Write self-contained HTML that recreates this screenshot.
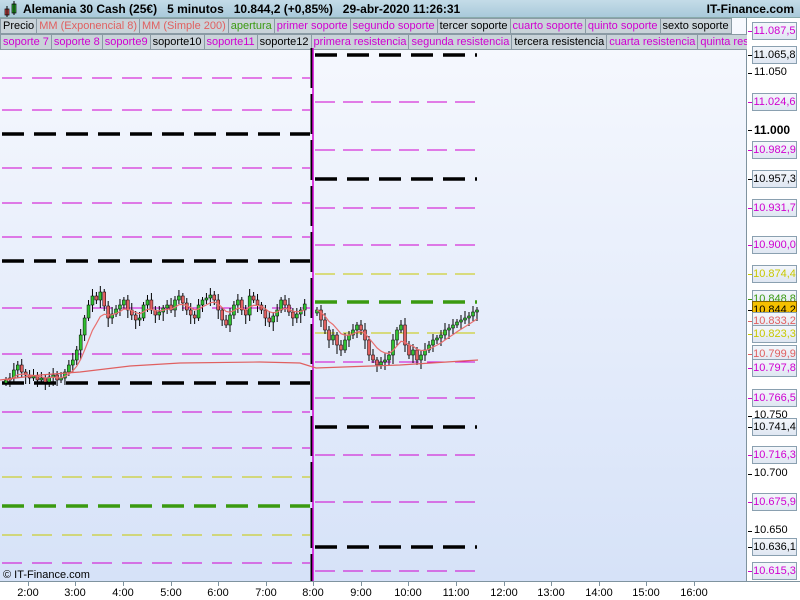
<!DOCTYPE html>
<html><head><meta charset="utf-8"><style>
*{margin:0;padding:0;box-sizing:border-box}
body{width:800px;height:600px;overflow:hidden;font-family:"Liberation Sans",sans-serif;background:#fff;position:relative}
#hdr{position:absolute;left:0;top:0;width:800px;height:18px;background:linear-gradient(#c4dce8,#a9c9da);border-bottom:1px solid #8aa;font-size:12px;font-weight:bold;line-height:18px;color:#000}
#chart{position:absolute;left:0;top:18px;width:747px;height:563px;background:linear-gradient(#f7f9fe,#d6e2f8);border-right:1px solid #7f939f}
.row{position:absolute;left:0;height:16px;font-size:11px;line-height:15px;white-space:nowrap;overflow:hidden}
.row span{display:inline-block;background:#c9d3d9;border:1px solid #8a9aa4;padding:0 2px;margin-right:-1px;height:16px}
.m{color:#d000d0}.r{color:#e06060}.g{color:#3a9a10}.k{color:#000}
#ax{position:absolute;left:748px;top:18px;width:52px;height:563px;background:#fff}
.pl{position:absolute;left:752px;width:45px;height:18px;font-size:11px;line-height:16px;text-align:center;border:1px solid #8aa0b0;background:linear-gradient(#f4f7fb,#dfe7f2)}
.pt{position:absolute;left:754px;font-size:11px}
#tax{position:absolute;left:0;top:581px;width:800px;height:19px;background:#fff;border-top:1px solid #7f939f;font-size:11px}
#tax div{position:absolute;top:5px;transform:translateX(-50%)}
#tax i{position:absolute;top:0;width:1px;height:4px;background:#7f939f}
</style></head><body>
<div id="hdr">
<svg width="16" height="18" style="position:absolute;left:3px;top:0"><rect x="2" y="9" width="4" height="6" fill="#e05050" stroke="#000" stroke-width=".7"/><line x1="4" y1="6" x2="4" y2="17" stroke="#000"/><rect x="9" y="4" width="4" height="9" fill="#30c030" stroke="#000" stroke-width=".7"/><line x1="11" y1="1" x2="11" y2="15" stroke="#000"/></svg>
<span style="position:absolute;left:23px">Alemania 30 Cash (25€)&nbsp;&nbsp;&nbsp;5 minutos&nbsp;&nbsp;&nbsp;10.844,2 (+0,85%)&nbsp;&nbsp;&nbsp;29-abr-2020 11:26:31</span>
<span style="position:absolute;right:6px">IT-Finance.com</span>
</div>
<div id="chart"></div>
<div class="row" style="top:18px;width:325px;width:748px"><span class="k">Precio</span><span class="r">MM (Exponencial 8)</span><span class="r">MM (Simple 200)</span><span class="g">apertura</span><span class="m">primer soporte</span><span class="m">segundo soporte</span><span class="k">tercer soporte</span><span class="m">cuarto soporte</span><span class="m">quinto soporte</span><span class="k">sexto soporte</span></div>
<div class="row" style="top:34px;width:747px"><span class="m">soporte 7</span><span class="m">soporte 8</span><span class="m">soporte9</span><span class="k">soporte10</span><span class="m">soporte11</span><span class="k">soporte12</span><span class="m">primera resistencia</span><span class="m">segunda resistencia</span><span class="k">tercera resistencia</span><span class="m">cuarta resistencia</span><span class="m">quinta resistencia</span></div>
<svg id="sv" width="747" height="600" style="position:absolute;left:0;top:0">
<g id="lines"></g><g id="cand"></g>
<text x="3" y="578" font-size="11" font-family="Liberation Sans">© IT-Finance.com</text>
</svg>
<div id="ax"></div>
<div id="labels"></div>
<div id="tax"></div>
<script>
var NS="http://www.w3.org/2000/svg";
function el(p,t,a){var e=document.createElementNS(NS,t);for(var k in a)e.setAttribute(k,a[k]);p.appendChild(e);return e;}
var L=document.getElementById('lines'),C=document.getElementById('cand');
var M='#d000d0',K='#000',G='#3a9a10',Y='#c8c800';
function ln(x1,x2,y,c,w,da){el(L,'line',{x1:x1,x2:x2,y1:y,y2:y,stroke:c,'stroke-width':w,'stroke-dasharray':da});}
var left=[[78,M],[110,M],[134,K],[168,M],[203,M],[237,M],[261,K],[308,M],[354,M],[383,K],[412,M],[448,M],[477,Y],[506,G],[535,Y],[563,M]];
left.forEach(function(a){var th=(a[1]==K||a[1]==G);ln(2,310,a[0],a[1],th?3.5:1,th?'22,10':'20,10');});
var right=[[55,K],[102,M],[150,M],[179,K],[208,M],[245,M],[274,Y],[302,G],[333,Y],[362,M],[398,M],[427,K],[455,M],[502,M],[547,K],[571,M]];
right.forEach(function(a){var th=(a[1]==K||a[1]==G);ln(315,477,a[0],a[1],th?3.5:1,th?'22,10':'20,8');});
el(L,'line',{x1:312,x2:312,y1:48,y2:581,stroke:K,'stroke-width':3,'stroke-dasharray':'40,6'});
el(L,'line',{x1:313,x2:313,y1:48,y2:581,stroke:M,'stroke-width':1.5});
var lc=[380,378,370,365,372,375,378,376,380,378,382,377,375,380,378,372,365,360,350,335,318,305,296,300,292,306,318,314,309,305,300,310,315,320,318,305,300,310,315,312,308,305,310,300,296,303,310,315,318,305,300,298,295,300,310,320,325,315,305,300,310,315,296,300,305,310,318,322,316,310,300,305,312,318,314,310,304];
var rc=[310,320,330,340,335,345,350,340,335,330,325,330,340,355,360,365,362,360,355,340,330,325,345,355,350,360,355,350,345,340,338,335,330,328,325,322,320,318,316,312,310];
function draw(arr,x0,dx){var pts=[],e=arr[0];for(var i=0;i<arr.length;i++){var o=i?arr[i-1]:arr[0]+3,c=arr[i],x=x0+i*dx;var hi=Math.min(o,c)-3-(i*7%5),lo=Math.max(o,c)+3+(i*11%7);
el(C,'line',{x1:x,x2:x,y1:hi,y2:lo,stroke:'#000','stroke-width':1});
el(C,'rect',{x:x-1.5,y:Math.min(o,c),width:3,height:Math.max(1.5,Math.abs(o-c)),fill:c<o?'#30c030':'#e06060',stroke:'#000','stroke-width':.5});
e=e+(c-e)*2/9;pts.push(x+','+e.toFixed(1));}
el(C,'polyline',{points:pts.join(' '),fill:'none',stroke:'#e87070','stroke-width':1.2});}
draw(lc,6,3.93);draw(rc,317,4);
el(C,'polyline',{points:'0,380 40,375 80,372 130,366 180,363 260,362 300,363 316,368 400,365 478,360',fill:'none',stroke:'#e06060','stroke-width':1.2});
var ax=document.getElementById('labels'),h='';
var pl=[[31,'11.087,5',M],[55,'11.065,8',K],[102,'11.024,6',M],[150,'10.982,9',M],[179,'10.957,3',K],[208,'10.931,7',M],[245,'10.900,0',M],[274,'10.874,4',Y],[299,'10.848,8',G],[310,'10.844,2','o'],[321,'10.833,2','#e06060'],[334,'10.823,3',Y],[354,'10.799,9','#e06060'],[368,'10.797,8',M],[398,'10.766,5',M],[427,'10.741,4',K],[455,'10.716,3',M],[502,'10.675,9',M],[547,'10.636,1',K],[571,'10.615,3',M]];
[[73,'11.050'],[130,'11.000'],[416,'10.750'],[474,'10.700'],[531,'10.650']].forEach(function(a){h+='<div class="pt" style="top:'+(a[0]-7)+'px;'+(a[1]=='11.000'?'font-weight:bold;font-size:12px':'')+'">'+a[1]+'</div><div style="position:absolute;left:748px;top:'+a[0]+'px;width:4px;height:1px;background:#000"></div>';});
pl.forEach(function(a){var st=a[2]=='o'?'background:#f5c000;color:#000;border-color:#806000':'color:'+a[2];h+='<div class="pl" style="top:'+(a[0]-9)+'px;'+st+'">'+a[1]+'</div><div style="position:absolute;left:748px;top:'+a[0]+'px;width:4px;height:1px;background:'+(a[2]=='o'?'#000':a[2])+'"></div>';});
ax.innerHTML=h;
var t='',xs=[28,75,123,171,218,266,313,361,408,456,504,551,599,646,694],lb=['2:00','3:00','4:00','5:00','6:00','7:00','8:00','9:00','10:00','11:00','12:00','13:00','14:00','15:00','16:00'];
xs.forEach(function(x,i){t+='<i style="left:'+x+'px"></i><div style="left:'+x+'px">'+lb[i]+'</div>';});
document.getElementById('tax').innerHTML=t;
</script>
</body></html>
